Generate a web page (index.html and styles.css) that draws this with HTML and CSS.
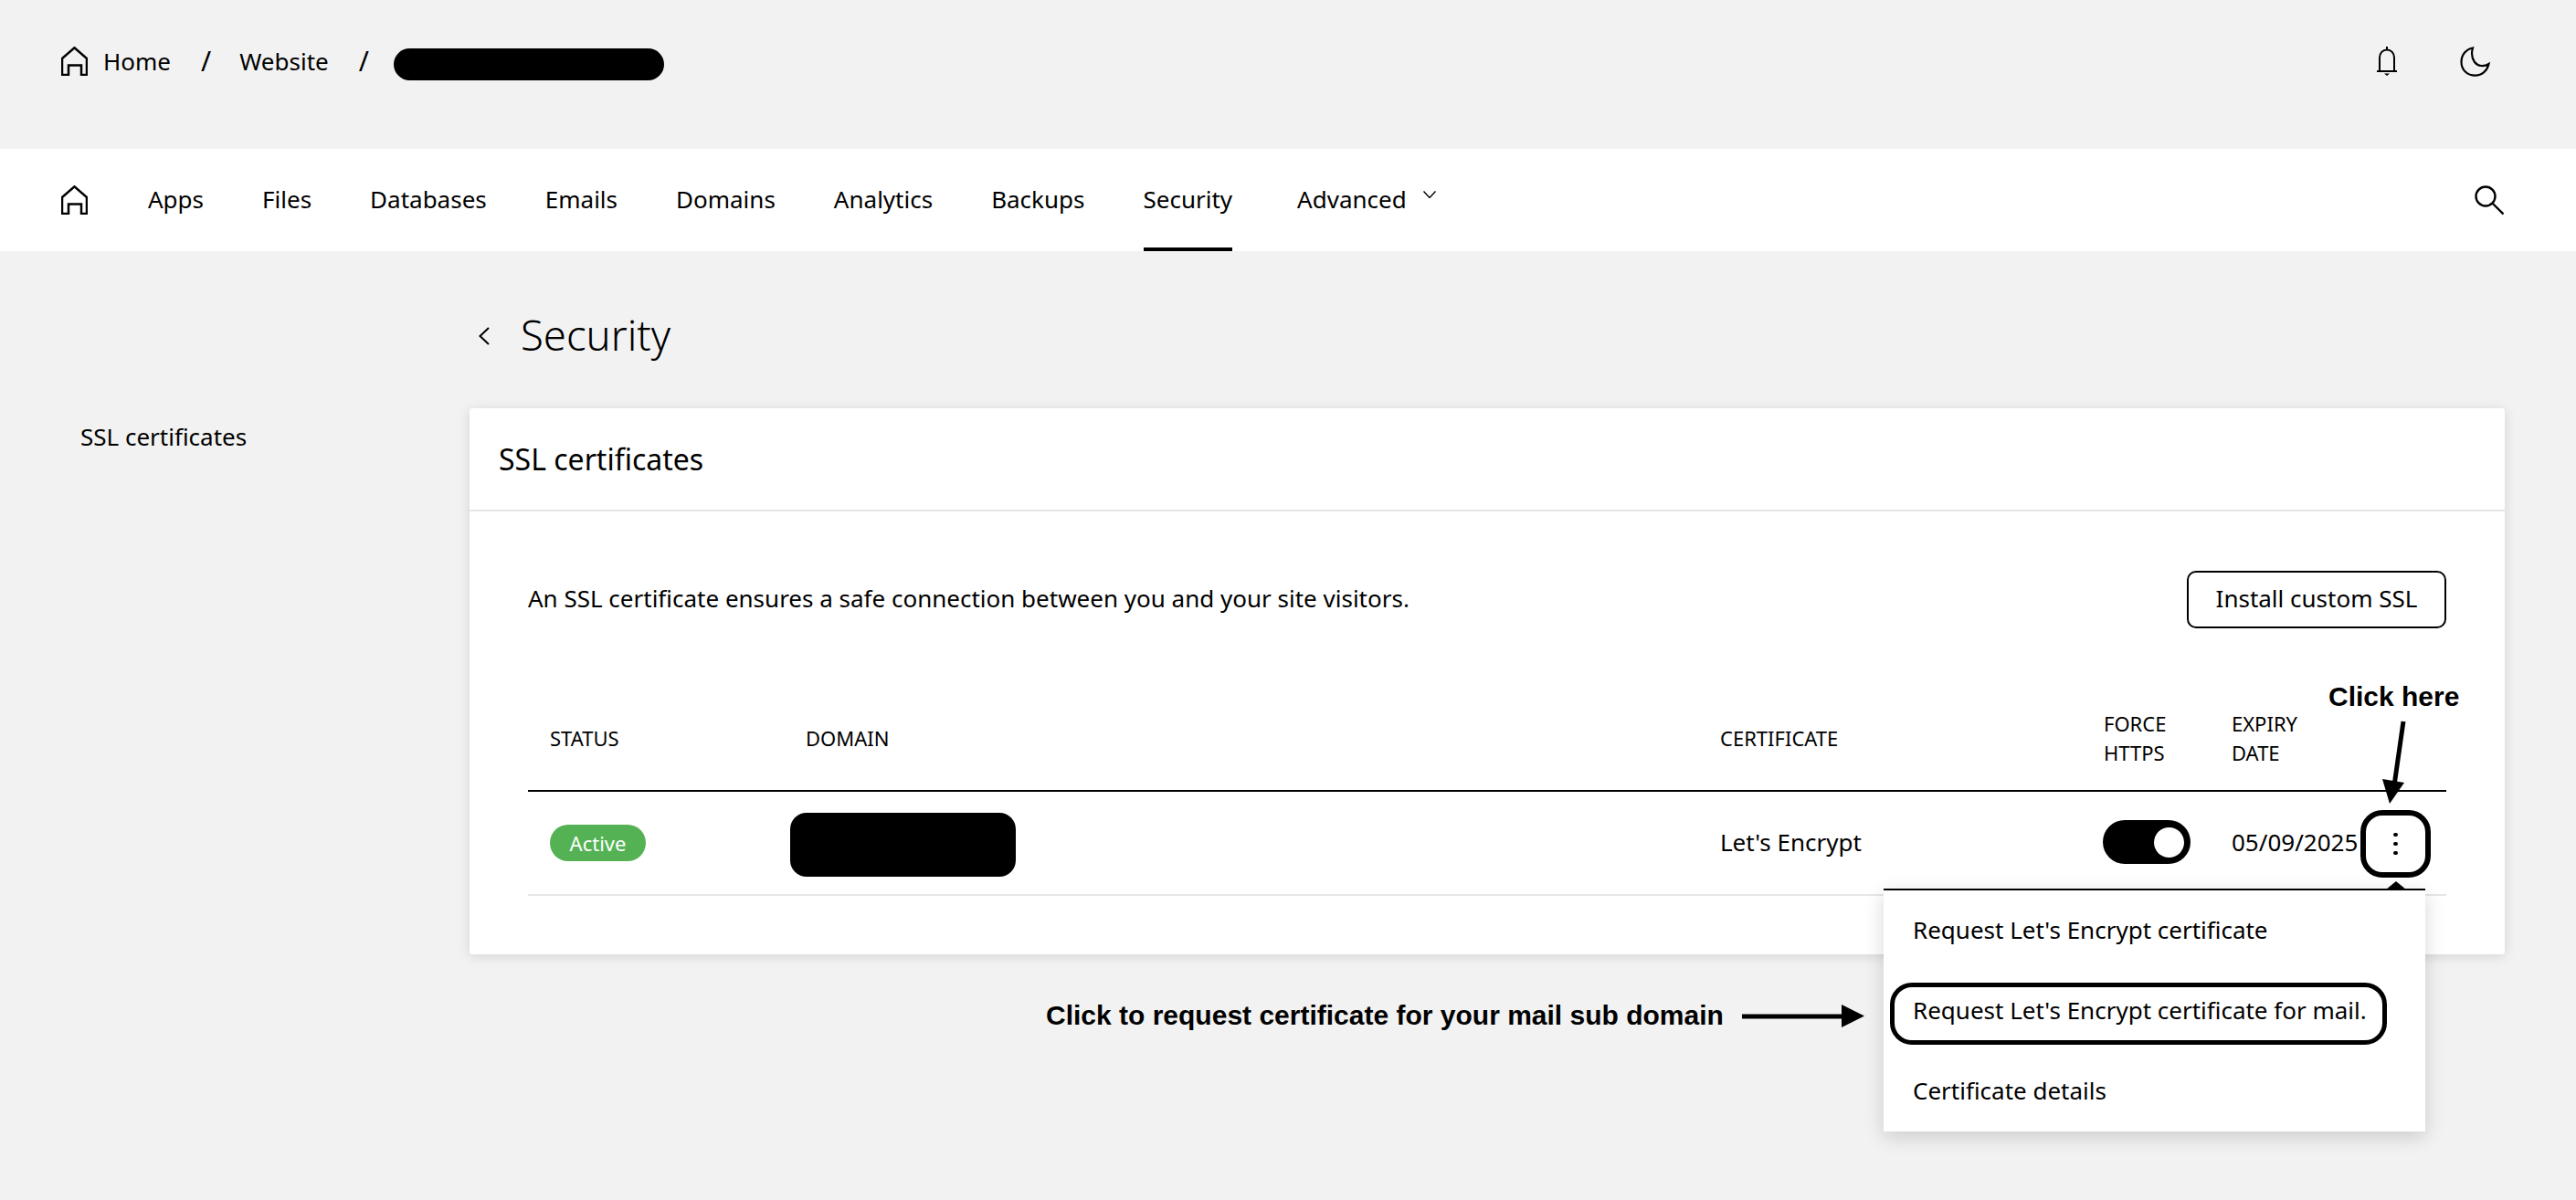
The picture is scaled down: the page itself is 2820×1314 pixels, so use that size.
FILE: index.html
```html
<!DOCTYPE html>
<html lang="en">
<head>
<meta charset="utf-8">
<title>Security</title>
<link rel="stylesheet" href="styles.css">
</head>
<body>
<div class="page">
  <header class="topbar">
    <nav class="crumbs">
      <svg class="icon-home" viewBox="0 0 29 32"><path d="M1 31V13L14.500 1.300L28 13V31H22V20.500H8V31Z"/></svg>
      <span class="crumb-home">Home</span>
      <span class="crumb-sep">/</span>
      <span>Website</span>
      <span class="crumb-sep crumb-sep-last">/</span>
      <span class="redact-name"></span>
    </nav>
    <div class="top-actions">
      <svg class="icon-bell" viewBox="0 0 24 32"><path d="M4 27V12C4 7 7.500 3.500 12 3.500S20 7 20 12V27M1 27H23"/><path class="solid" d="M11 0H13V4H11ZM9 29.500H15L12 32Z"/></svg>
      <svg class="icon-moon" viewBox="0 0 33 33"><path d="M14 1.500C6.500 3 1.500 9 1.500 17C1.500 25.500 8 31.700 16.500 31.700C24 31.700 29.800 26.500 31.500 19C26 22.500 19.500 21.500 16 17C13.200 13 12.500 6.500 14 1.500Z"/></svg>
    </div>
  </header>

  <nav class="mainnav">
    <svg class="icon-home" viewBox="0 0 29 32"><path d="M1 31V13L14.500 1.300L28 13V31H22V20.500H8V31Z"/></svg>
    <ul class="navlist">
      <li>Apps</li>
      <li>Files</li>
      <li>Databases</li>
      <li>Emails</li>
      <li>Domains</li>
      <li>Analytics</li>
      <li>Backups</li>
      <li class="is-active">Security</li>
      <li class="nav-advanced">Advanced
        <svg class="icon-chevron" viewBox="0 0 14 8"><path d="M.5.500L7 7.500L13.500.500"/></svg>
      </li>
    </ul>
    <svg class="icon-search" viewBox="0 0 32 33"><circle cx="12" cy="12" r="10.500"/><path d="M19.500 19.500L31.500 31.500"/></svg>
  </nav>

  <div class="layout">
    <aside class="sidebar">SSL certificates</aside>
    <main class="content">
      <div class="page-title">
        <svg class="icon-back" viewBox="0 0 12 20"><path d="M11 1L1.500 10L11 19"/></svg>
        <h1>Security</h1>
      </div>
      <section class="card">
        <h2 class="card-title">SSL certificates</h2>
        <div class="card-body">
          <div class="intro">
            <p>An SSL certificate ensures a safe connection between you and your site visitors.</p>
            <button class="btn">Install custom SSL</button>
          </div>
          <div class="table">
            <div class="row row-head">
              <div>STATUS</div>
              <div>DOMAIN</div>
              <div>CERTIFICATE</div>
              <div>FORCE<br>HTTPS</div>
              <div>EXPIRY<br>DATE</div>
            </div>
            <div class="row row-data">
              <div><span class="badge">Active</span></div>
              <div><span class="redact-domain"></span></div>
              <div>Let's Encrypt</div>
              <div><span class="toggle"><span class="knob"></span></span></div>
              <div>05/09/2025</div>
            </div>
          </div>
        </div>
      </section>
    </main>
  </div>

  <button class="kebab" aria-label="More"><span></span><span></span><span></span></button>
  <div class="caret"></div>
  <ul class="menu">
    <li>Request Let's Encrypt certificate</li>
    <li class="is-marked">Request Let's Encrypt certificate for mail.</li>
    <li>Certificate details</li>
  </ul>

  <div class="note note-here">Click here</div>
  <div class="note note-mail">Click to request certificate for your mail sub domain</div>
  <svg class="arrows" viewBox="0 0 2820 1314">
    <path class="shaft" d="M2631 790L2621 860"/>
    <path class="head" d="M2608 853L2632 857L2616 880Z"/>
    <path class="shaft" d="M1907 1113H2020"/>
    <path class="head" d="M2016 1100L2041 1112.500L2016 1125Z"/>
  </svg>
</div>
</body>
</html>
```

FILE: styles.css
```css
*, *::before, *::after { box-sizing: border-box; }
html, body { margin: 0; padding: 0; }
body {
  background: #f2f2f2;
  color: #000;
  font-family: "Noto Sans", "Open Sans", sans-serif;
  font-size: 26px;
  line-height: 36px;
}
.page { position: relative; width: 2820px; height: 1314px; overflow: hidden; }

svg { display: block; flex: none; fill: none; stroke: #000; }
.icon-home { width: 29px; height: 32px; stroke-width: 2.500; }
.icon-bell { width: 24px; height: 32px; stroke-width: 2; }
.icon-bell .solid { fill: #000; stroke: none; }
.icon-moon { width: 33px; height: 33px; stroke-width: 2.200; }
.icon-search { width: 32px; height: 33px; stroke-width: 2.400; }
.icon-chevron { width: 14px; height: 8px; stroke-width: 1.400; margin-top: -10px; }
.icon-back { width: 12px; height: 20px; stroke-width: 2; }

.topbar {
  height: 163px;
  padding: 51px 94px 0 67px;
  display: flex;
  justify-content: space-between;
  align-items: flex-start;
}
.crumbs { display: flex; align-items: center; height: 32px; }
.crumb-home { margin-left: 17px; }
.crumb-sep { margin: 0 31px 0 33px; font-size: 30px; }
.crumb-sep-last { margin: 0 27px 0 33px; }
.redact-name { width: 296px; height: 35px; margin-top: 7px; border-radius: 18px; background: #000; }
.top-actions { display: flex; gap: 68px; align-items: flex-start; }

.mainnav {
  height: 112px;
  background: #fff;
  padding: 0 79px 0 67px;
  display: flex;
  align-items: center;
}
.navlist {
  list-style: none;
  display: flex;
  gap: 64px;
  margin: 0 0 0 66px;
  padding: 0;
  height: 100%;
  flex: 1;
}
.navlist li { display: flex; align-items: center; position: relative; height: 100%; padding-bottom: 2px; }
.navlist .is-active { box-shadow: inset 0 -4px 0 #000; }
.nav-advanced { gap: 18px; margin-left: 7px; }

.layout { display: grid; grid-template-columns: 514px 1fr; padding-right: 78px; }
.sidebar { padding: 185px 0 0 88px; }
.content { min-width: 0; }
.page-title { height: 172px; padding: 59px 0 0 10px; display: flex; align-items: flex-start; }
.page-title .icon-back { margin-top: 24px; }
.page-title h1 { margin: 0 0 0 34px; font-size: 45.500px; font-weight: 300; line-height: 64px; }

.card { background: #fff; border-radius: 3px; box-shadow: 0 2px 14px rgba(0,0,0,.13); height: 598px; }
.card-title {
  margin: 0;
  height: 113px;
  padding: 0 32px;
  display: flex;
  align-items: center;
  font-size: 32px;
  font-weight: 400;
  border-bottom: 2px solid #e6e6e6;
}
.card-body { padding: 65px 64px 0 64px; }
.intro { display: flex; justify-content: space-between; align-items: center; height: 63px; margin-bottom: 88px; }
.intro p { margin: 0 0 3px; }
.btn {
  width: 284px;
  height: 63px;
  background: #fff;
  border: 2px solid #000;
  border-radius: 10px;
  font: inherit;
  color: #000;
  padding: 0 0 3px;
}

.row { display: grid; grid-template-columns: 280px 1001px 420px 140px 235px; padding-left: 24px; }
.row-head {
  font-size: 22px;
  line-height: 32px;
  align-items: center;
  padding-bottom: 25px;
  border-bottom: 2px solid #000;
}
.row-data {
  height: 114px;
  align-items: center;
  border-bottom: 2px solid #e6e6e6;
  padding-bottom: 2px;
}
.badge {
  display: inline-flex;
  align-items: center;
  justify-content: center;
  width: 105px;
  height: 40px;
  border-radius: 20px;
  background: #55b254;
  color: #fff;
  font-size: 22px;
  vertical-align: middle;
}
.redact-domain { display: block; width: 247px; height: 70px; margin: 5px 0 0 -17px; border-radius: 18px; background: #000; }
.toggle { display: block; width: 96px; height: 48px; border-radius: 24px; background: #000; position: relative; margin-left: -1px; }
.knob { position: absolute; top: 8px; right: 7px; width: 33px; height: 33px; border-radius: 50%; background: #fff; }

.kebab {
  position: absolute;
  left: 2584px;
  top: 887px;
  width: 77px;
  height: 74px;
  border: 6px solid #000;
  border-radius: 24px;
  background: #fff;
  padding: 0;
  display: flex;
  flex-direction: column;
  align-items: center;
  justify-content: center;
  gap: 5.500px;
}
.kebab span { width: 4.500px; height: 4.500px; border-radius: 50%; background: #000; }
.caret {
  position: absolute;
  left: 2612px;
  top: 965px;
  width: 0;
  height: 0;
  border: 11px solid transparent;
  border-top: 0;
  border-bottom: 9px solid #000;
}
.menu {
  position: absolute;
  left: 2062px;
  top: 973px;
  width: 593px;
  margin: 0;
  padding: 0;
  list-style: none;
  background: #fff;
  border-top: 2px solid #000;
  box-shadow: 0 6px 20px rgba(0,0,0,.16);
}
.menu li { height: 88px; padding: 0 32px 3px; display: flex; align-items: center; position: relative; }
.is-marked::after {
  content: "";
  position: absolute;
  left: 7px;
  top: 13px;
  width: 544px;
  height: 68px;
  border: 5px solid #000;
  border-radius: 24px;
}

.note { position: absolute; font-family: "Liberation Sans", Arial, sans-serif; font-weight: 700; font-size: 30px; line-height: 36px; white-space: nowrap; }
.note-here { left: 2549px; top: 745px; }
.note-mail { left: 1145px; top: 1094px; }
.arrows { position: absolute; left: 0; top: 0; width: 2820px; height: 1314px; pointer-events: none; }
.arrows .shaft { stroke-width: 5; }
.arrows .head { fill: #000; stroke: none; }
```
